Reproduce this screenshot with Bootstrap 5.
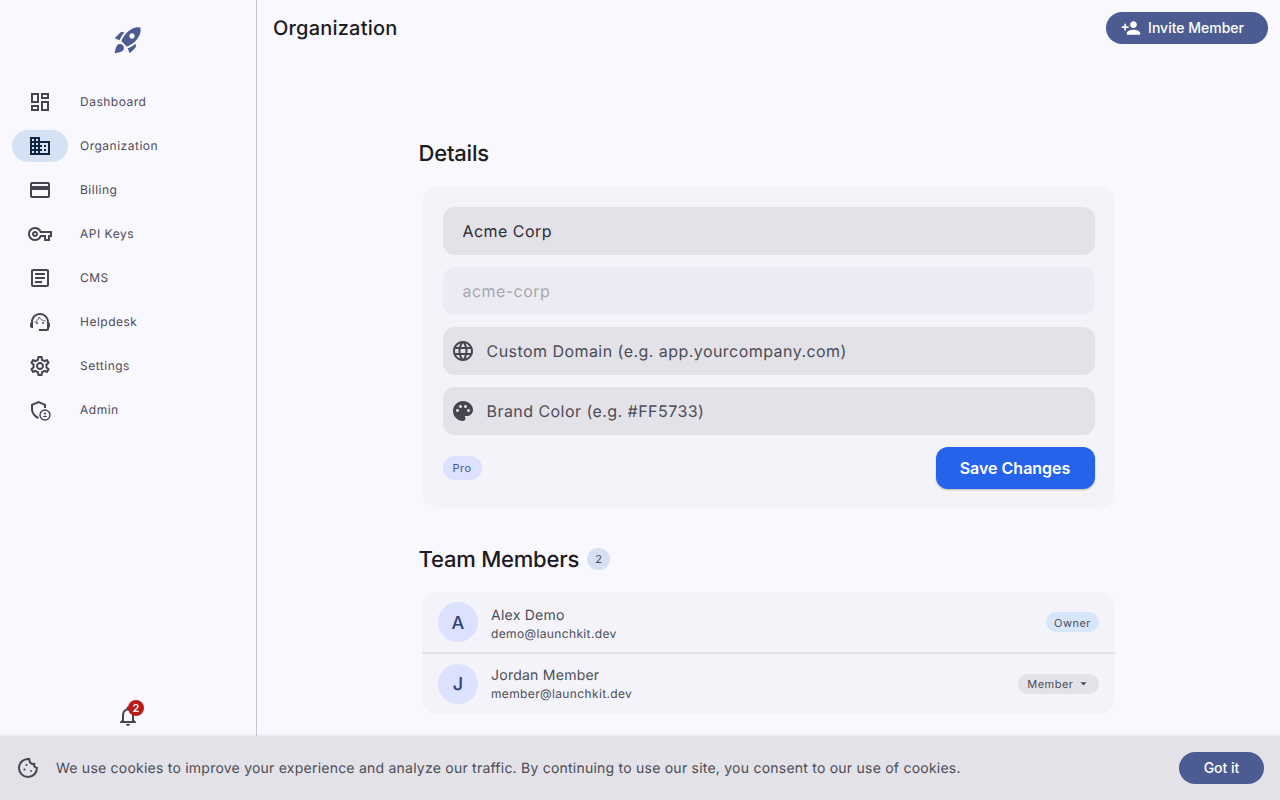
<!DOCTYPE html>
<html lang="en">
<head>
<meta charset="utf-8">
<title>Organization</title>
<link href="https://cdn.jsdelivr.net/npm/bootstrap@5.3.0/dist/css/bootstrap.min.css" rel="stylesheet">
<style>
html,body{height:100%}
body{font-family:Inter,"Liberation Sans",sans-serif;background:#faf8ff;color:#1b1b21;overflow:hidden;text-rendering:geometricPrecision}
svg{fill:currentColor;flex:none;display:block}
.app-shell{height:800px}
.work-row{height:736px}
.side-rail{width:257px;flex:none;border-right:1px solid #c7c5d0;padding-top:24px;padding-bottom:8px}
.rail-logo{color:#4c5c92;height:32px;margin-bottom:24px}
.rail-item{height:44px;padding-left:12px;color:#4c4c55;font-size:12px;letter-spacing:.5px;text-decoration:none;font-weight:400}
.rail-ico{width:56px;height:32px;border-radius:16px;color:#46464f}
.rail-item.on{color:#4c4c55}
.rail-item.on .rail-ico{background:#d5e2f3;color:#0f2540}
.rail-text{margin-left:12px}
.bell-wrap{width:24px;height:24px;color:#46464f;margin:0 auto}
.bell-count{top:-4px;left:12px;width:16px;height:16px;border-radius:50%;background:#ba1a1a;color:#fff;font-size:11px;font-weight:600;line-height:16px;text-align:center}
.main-pane{min-width:0}
.top-bar{height:56px;padding:0 12px 0 16px}
.page-title{font-size:20px;font-weight:500;line-height:24px;margin:0;color:#1b1b21;letter-spacing:.2px}
.pill-btn{background:#4c5c92;color:#fff;border:0;border-radius:16px;height:32px;font-size:14px;font-weight:500;letter-spacing:0;padding:0 24px;line-height:30px}
.pill-btn:hover{background:#4c5c92;color:#fff}
.invite-btn{padding:0 24px 0 15px;gap:7px}
.content-col{width:700px;margin:0 auto;padding-top:83px}
.sect-head{font-size:22px;font-weight:500;line-height:30px;height:28px;margin:0;color:#1b1b21;letter-spacing:-.2px}
.panel{background:#f4f3fa;border-radius:16px;margin:0 3.5px}
.details-panel{margin-top:19px;padding:21px 20.5px 19px;gap:12px}
.field-box{height:48px;background:#e3e2e8;border-radius:12px;padding:0 20px;color:#46464f}
.field-box.with-ico{padding-left:8px;gap:12px}
.field-box.muted-box{background:#ecebf3}
.field-input{background:transparent;border:0;outline:0;width:100%;padding:0;font-size:16px;letter-spacing:.45px;color:#2c2c33;font-family:inherit;font-weight:400;text-rendering:geometricPrecision}
.field-input::placeholder{color:#4c4c55;opacity:1}
.field-input:disabled{color:#a8a7af}
.plan-chip{background:#dce1ff;color:#44548b;font-size:11px;font-weight:400;letter-spacing:.5px;height:24px;line-height:24px;border-radius:12px;padding:0 10px}
.save-btn{background:#2563eb;color:#fff;border:0;border-radius:12px;height:42px;width:159px;font-size:16px;font-weight:600;padding:0;box-shadow:0 1px 2px rgba(0,0,0,.25)}
.save-btn:hover{background:#2563eb;color:#fff}
.team-head{margin-top:37px;height:28px;gap:8px}
.count-chip{background:#d5e2f3;color:#46464f;font-size:11px;width:23px;height:22px;line-height:22px;border-radius:11px;text-align:center}
.team-panel{margin-top:19px;overflow:hidden}
.member-row{height:60px;padding:0 16px}
.member-row+.member-row{border-top:2px solid #e3e2e8;height:62px;padding-bottom:1px}
.avatar-dot{width:40px;height:40px;border-radius:50%;background:#dce1ff;color:#2f3f75;font-size:18px;font-weight:500;padding-top:2px}
.member-info{margin-left:13px}
.member-row:first-child .member-info{padding-top:1px}
.member-row+.member-row .member-info{padding-bottom:1px}
.member-name{font-size:14px;line-height:21px;letter-spacing:.25px;color:#4c4c55;font-weight:400}
.member-mail{font-size:12px;line-height:15px;letter-spacing:.36px;color:#4c4c55;font-weight:400}
.role-chip{font-size:11px;height:20px;line-height:22px;letter-spacing:.5px;border-radius:10px;padding:0 8px;color:#4c4c55;font-weight:400}
.role-owner{background:#d8e6fb}
.role-member{background:#e3e2e8;padding:0 8.5px 0 9px;gap:2px}
.cookie-bar{height:64px;background:#e3e2e8;padding:0 16px;gap:16px;box-shadow:0 -1px 2px rgba(0,0,0,.08);color:#46464f}
.cookie-text{font-size:14px;letter-spacing:.23px;color:#4c4c55;line-height:20px;font-weight:400;margin-top:2px}
.gotit-btn{padding:0;width:85px}
</style>
</head>
<body>
<div class="app-shell d-flex flex-column">
  <div class="work-row d-flex">
    <nav class="side-rail d-flex flex-column">
      <div class="rail-logo d-flex justify-content-center">
        <svg width="32" height="32" viewBox="0 0 24 24"><path d="M9.19 6.35c-2.04 2.29-3.44 5.58-3.57 5.89L2 10.69l4.05-4.05c.47-.47 1.15-.68 1.81-.55l1.33.26zM11.17 17s3.74-1.55 5.89-3.7c5.4-5.4 4.5-9.62 4.21-10.57-.95-.3-5.17-1.19-10.57 4.21C8.55 9.09 7 12.83 7 12.83L11.17 17zm6.48-2.19c-2.29 2.04-5.58 3.44-5.89 3.57L13.31 22l4.05-4.05c.47-.47.68-1.15.55-1.81l-.21-1.33zM9 18c0 .83-.34 1.58-.88 2.12C6.94 21.3 2 22 2 22s.7-4.94 1.88-6.12C4.42 15.34 5.17 15 6 15c1.66 0 3 1.34 3 3zm4-9c0-1.1.9-2 2-2s2 .9 2 2-.9 2-2 2-2-.9-2-2z"/></svg>
      </div>
      <a class="rail-item d-flex align-items-center" href="#"><span class="rail-ico d-flex align-items-center justify-content-center"><svg width="24" height="24" viewBox="0 0 24 24"><path d="M19 5v2h-4V5h4M9 5v6H5V5h4m10 8v6h-4v-6h4M9 17v2H5v-2h4M21 3h-8v6h8V3zM11 3H3v10h8V3zm10 8h-8v10h8V11zm-10 4H3v6h8v-6z"/></svg></span><span class="rail-text">Dashboard</span></a>
      <a class="rail-item on d-flex align-items-center" href="#"><span class="rail-ico d-flex align-items-center justify-content-center"><svg width="24" height="24" viewBox="0 0 24 24"><path d="M12 7V3H2v18h20V7H12zM6 19H4v-2h2v2zm0-4H4v-2h2v2zm0-4H4V9h2v2zm0-4H4V5h2v2zm4 12H8v-2h2v2zm0-4H8v-2h2v2zm0-4H8V9h2v2zm0-4H8V5h2v2zm10 12h-8v-2h2v-2h-2v-2h2v-2h-2V9h8v10zm-2-8h-2v2h2v-2zm0 4h-2v2h2v-2z"/></svg></span><span class="rail-text">Organization</span></a>
      <a class="rail-item d-flex align-items-center" href="#"><span class="rail-ico d-flex align-items-center justify-content-center"><svg width="24" height="24" viewBox="0 0 24 24"><path d="M20 4H4c-1.11 0-1.99.89-1.99 2L2 18c0 1.11.89 2 2 2h16c1.11 0 2-.89 2-2V6c0-1.11-.89-2-2-2zm0 14H4v-6h16v6zm0-10H4V6h16v2z"/></svg></span><span class="rail-text">Billing</span></a>
      <a class="rail-item d-flex align-items-center" href="#"><span class="rail-ico d-flex align-items-center justify-content-center"><svg width="24" height="24" viewBox="0 0 24 24"><path d="M22 19h-6v-4h-2.68c-1.14 2.42-3.6 4-6.32 4-3.86 0-7-3.14-7-7s3.14-7 7-7c2.72 0 5.17 1.58 6.32 4H24v6h-2v4zm-4-2h2v-4h2v-2H11.94l-.23-.67C11.01 8.34 9.11 7 7 7c-2.76 0-5 2.24-5 5s2.24 5 5 5c2.11 0 4.01-1.34 4.71-3.33l.23-.67H18v4zM7 15c-1.65 0-3-1.35-3-3s1.35-3 3-3 3 1.35 3 3-1.35 3-3 3zm0-4c-.55 0-1 .45-1 1s.45 1 1 1 1-.45 1-1-.45-1-1-1z"/></svg></span><span class="rail-text">API Keys</span></a>
      <a class="rail-item d-flex align-items-center" href="#"><span class="rail-ico d-flex align-items-center justify-content-center"><svg width="24" height="24" viewBox="0 0 24 24"><path d="M19 5v14H5V5h14m0-2H5c-1.1 0-2 .9-2 2v14c0 1.1.9 2 2 2h14c1.1 0 2-.9 2-2V5c0-1.1-.9-2-2-2z"/><path d="M14 17H7v-2h7v2zm3-4H7v-2h10v2zm0-4H7V7h10v2z"/></svg></span><span class="rail-text">CMS</span></a>
      <a class="rail-item d-flex align-items-center" href="#"><span class="rail-ico d-flex align-items-center justify-content-center"><svg width="24" height="24" viewBox="0 0 24 24"><path d="M21 12.22C21 6.73 16.74 3 12 3c-4.69 0-9 3.65-9 9.28-.6.34-1 .98-1 1.72v2c0 1.1.9 2 2 2h1v-6.1c0-3.87 3.13-7 7-7s7 3.13 7 7V19h-8v2h8c1.1 0 2-.9 2-2v-1.22c.59-.31 1-.92 1-1.64v-2.3c0-.7-.41-1.31-1-1.62z"/><circle cx="9" cy="13" r="1"/><circle cx="15" cy="13" r="1"/><path d="M6.5 12.3C9 11.3 10.6 9.4 11.1 7c1.2 2.2 3.6 3.8 6.4 4" fill="none" stroke="currentColor" stroke-width=".9"/></svg></span><span class="rail-text">Helpdesk</span></a>
      <a class="rail-item d-flex align-items-center" href="#"><span class="rail-ico d-flex align-items-center justify-content-center"><svg width="24" height="24" viewBox="0 0 24 24"><path d="M19.43 12.98c.04-.32.07-.64.07-.98 0-.34-.03-.66-.07-.98l2.11-1.65c.19-.15.24-.42.12-.64l-2-3.46c-.09-.16-.26-.25-.44-.25-.06 0-.12.01-.17.03l-2.49 1c-.52-.4-1.08-.73-1.69-.98l-.38-2.65C14.46 2.18 14.25 2 14 2h-4c-.25 0-.46.18-.49.42l-.38 2.65c-.61.25-1.17.59-1.69.98l-2.49-1c-.06-.02-.12-.03-.18-.03-.17 0-.34.09-.43.25l-2 3.46c-.13.22-.07.49.12.64l2.11 1.65c-.04.32-.07.65-.07.98 0 .33.03.66.07.98l-2.11 1.65c-.19.15-.24.42-.12.64l2 3.46c.09.16.26.25.44.25.06 0 .12-.01.17-.03l2.49-1c.52.4 1.08.73 1.69.98l.38 2.65c.03.24.24.42.49.42h4c.25 0 .46-.18.49-.42l.38-2.65c.61-.25 1.17-.59 1.69-.98l2.49 1c.06.02.12.03.18.03.17 0 .34-.09.43-.25l2-3.46c.12-.22.07-.49-.12-.64l-2.11-1.65zm-1.98-1.71c.04.31.05.52.05.73 0 .21-.02.43-.05.73l-.14 1.13.89.7 1.08.84-.7 1.21-1.27-.51-1.04-.42-.9.68c-.43.32-.84.56-1.25.73l-1.06.43-.16 1.13-.2 1.35h-1.4l-.19-1.35-.16-1.13-1.06-.43c-.43-.18-.83-.41-1.23-.71l-.91-.7-1.06.43-1.27.51-.7-1.21 1.08-.84.89-.7-.14-1.13c-.03-.31-.05-.54-.05-.74s.02-.43.05-.73l.14-1.13-.89-.7-1.08-.84.7-1.21 1.27.51 1.04.42.9-.68c.43-.32.84-.56 1.25-.73l1.06-.43.16-1.13.2-1.35h1.39l.19 1.35.16 1.13 1.06.43c.43.18.83.41 1.23.71l.91.7 1.06-.43 1.27-.51.7 1.21-1.07.85-.89.7.14 1.13zM12 8c-2.21 0-4 1.79-4 4s1.79 4 4 4 4-1.79 4-4-1.79-4-4-4zm0 6c-1.1 0-2-.9-2-2s.9-2 2-2 2 .9 2 2-.9 2-2 2z"/></svg></span><span class="rail-text">Settings</span></a>
      <a class="rail-item d-flex align-items-center" href="#"><span class="rail-ico d-flex align-items-center justify-content-center"><svg width="24" height="24" viewBox="0 0 24 24"><path d="M10.5 20c-3.500-1-6.500-4.800-6.500-8.800V6.900l6.500-2.800L17 6.900v3.100" fill="none" stroke="currentColor" stroke-width="2"/><circle cx="17" cy="17" r="5" fill="none" stroke="currentColor" stroke-width="1.400"/><circle cx="17" cy="15.500" r="1.100"/><path d="M14.800 19c.1-.9 1.500-1.300 2.200-1.300s2.100.4 2.200 1.300z"/></svg></span><span class="rail-text">Admin</span></a>
      <div class="mt-auto">
        <div class="bell-wrap position-relative">
          <svg width="24" height="24" viewBox="0 0 24 24"><path d="M12 22c1.1 0 2-.9 2-2h-4c0 1.1.9 2 2 2zm6-6v-5c0-3.07-1.63-5.64-4.5-6.32V4c0-.83-.67-1.5-1.5-1.5s-1.5.67-1.5 1.5v.68C7.64 5.36 6 7.92 6 11v5l-2 2v1h16v-1l-2-2zm-2 1H8v-6c0-2.48 1.51-4.5 4-4.5s4 2.02 4 4.5v6z"/></svg>
          <span class="bell-count position-absolute">2</span>
        </div>
      </div>
    </nav>
    <main class="main-pane flex-grow-1">
      <header class="top-bar d-flex align-items-center justify-content-between">
        <h1 class="page-title">Organization</h1>
        <button class="btn pill-btn invite-btn d-flex align-items-center" type="button"><svg width="20" height="20" viewBox="0 0 24 24"><path d="M15 12c2.21 0 4-1.79 4-4s-1.79-4-4-4-4 1.79-4 4 1.79 4 4 4zm-9-2V7H4v3H1v2h3v3h2v-3h3v-2H6zm9 4c-2.67 0-8 1.34-8 4v2h16v-2c0-2.66-5.33-4-8-4z"/></svg>Invite Member</button>
      </header>
      <div class="content-col">
        <h2 class="sect-head">Details</h2>
        <form class="panel details-panel d-flex flex-column">
          <div class="field-box d-flex align-items-center"><input class="field-input" value="Acme Corp" aria-label="Name"></div>
          <div class="field-box muted-box d-flex align-items-center"><input class="field-input" value="acme-corp" disabled aria-label="Slug"></div>
          <div class="field-box with-ico d-flex align-items-center"><svg width="24" height="24" viewBox="0 0 24 24"><path d="M11.99 2C6.47 2 2 6.48 2 12s4.47 10 9.99 10C17.52 22 22 17.52 22 12S17.52 2 11.99 2zm6.93 6h-2.95c-.32-1.25-.78-2.45-1.38-3.56 1.84.63 3.37 1.91 4.33 3.56zM12 4.04c.83 1.2 1.48 2.53 1.91 3.96h-3.82c.43-1.43 1.08-2.76 1.91-3.96zM4.26 14C4.1 13.36 4 12.69 4 12s.1-1.36.26-2h3.38c-.08.66-.14 1.32-.14 2 0 .68.06 1.34.14 2H4.26zm.82 2h2.95c.32 1.25.78 2.45 1.38 3.56-1.84-.63-3.37-1.9-4.33-3.56zm2.95-8H5.08c.96-1.66 2.49-2.93 4.33-3.56C8.81 5.55 8.35 6.75 8.03 8zM12 19.96c-.83-1.2-1.48-2.53-1.91-3.96h3.82c-.43 1.43-1.08 2.76-1.91 3.96zM14.34 14H9.66c-.09-.66-.16-1.32-.16-2 0-.68.07-1.35.16-2h4.68c.09.65.16 1.32.16 2 0 .68-.07 1.34-.16 2zm.25 5.56c.6-1.11 1.06-2.31 1.38-3.56h2.95c-.96 1.65-2.49 2.93-4.33 3.56zM16.36 14c.08-.66.14-1.32.14-2 0-.68-.06-1.34-.14-2h3.38c.16.64.26 1.31.26 2s-.1 1.36-.26 2h-3.38z"/></svg><input class="field-input" placeholder="Custom Domain (e.g. app.yourcompany.com)" aria-label="Custom Domain"></div>
          <div class="field-box with-ico d-flex align-items-center"><svg width="24" height="24" viewBox="0 0 24 24"><path d="M12 2C6.49 2 2 6.49 2 12s4.49 10 10 10c1.38 0 2.5-1.12 2.5-2.5 0-.61-.23-1.2-.64-1.67-.08-.1-.13-.21-.13-.33 0-.28.22-.5.5-.5H16c3.31 0 6-2.69 6-6 0-4.96-4.49-9-10-9zm5.5 11c-.83 0-1.5-.67-1.5-1.5s.67-1.5 1.5-1.5 1.5.67 1.5 1.5-.67 1.5-1.5 1.5zm-3-4c-.83 0-1.5-.67-1.5-1.5S13.67 6 14.5 6s1.5.67 1.5 1.5S15.33 9 14.5 9zM5 11.5c0-.83.67-1.5 1.5-1.5s1.5.67 1.5 1.5S7.33 13 6.5 13 5 12.33 5 11.5zm6-4c0 .83-.67 1.5-1.5 1.5S8 8.33 8 7.5 8.67 6 9.5 6s1.5.67 1.5 1.5z"/></svg><input class="field-input" placeholder="Brand Color (e.g. #FF5733)" aria-label="Brand Color"></div>
          <div class="d-flex align-items-center justify-content-between">
            <span class="plan-chip">Pro</span>
            <button class="btn save-btn" type="button">Save Changes</button>
          </div>
        </form>
        <div class="team-head d-flex align-items-center">
          <h2 class="sect-head">Team Members</h2>
          <span class="count-chip">2</span>
        </div>
        <div class="panel team-panel">
          <div class="member-row d-flex align-items-center">
            <span class="avatar-dot d-flex align-items-center justify-content-center">A</span>
            <div class="member-info flex-grow-1"><div class="member-name">Alex Demo</div><div class="member-mail">demo@launchkit.dev</div></div>
            <span class="role-chip role-owner">Owner</span>
          </div>
          <div class="member-row d-flex align-items-center">
            <span class="avatar-dot d-flex align-items-center justify-content-center">J</span>
            <div class="member-info flex-grow-1"><div class="member-name">Jordan Member</div><div class="member-mail">member@launchkit.dev</div></div>
            <span class="role-chip role-member d-flex align-items-center">Member<svg width="15" height="15" viewBox="0 0 24 24"><path d="M7 10l5 5 5-5z"/></svg></span>
          </div>
        </div>
      </div>
    </main>
  </div>
  <div class="cookie-bar d-flex align-items-center">
    <svg width="24" height="24" viewBox="0 0 24 24"><path d="M20.9 11.9c-1.9-.2-3.4-1.700-2.700-3.900-2.800.6-5.100-1.400-5-4.900C7.500 2.400 3 6.800 3 12c0 5 4 9 9 9 5.200 0 9.100-4.300 8.900-9.100z" fill="none" stroke="currentColor" stroke-width="2"/><circle cx="8.500" cy="13.500" r="1.100"/><circle cx="10.500" cy="9" r="1.100"/><circle cx="15" cy="15" r=".9"/></svg>
    <span class="cookie-text flex-grow-1">We use cookies to improve your experience and analyze our traffic. By continuing to use our site, you consent to our use of cookies.</span>
    <button class="btn pill-btn gotit-btn" type="button">Got it</button>
  </div>
</div>
<script src="https://cdn.jsdelivr.net/npm/bootstrap@5.3.0/dist/js/bootstrap.bundle.min.js"></script>
</body>
</html>
